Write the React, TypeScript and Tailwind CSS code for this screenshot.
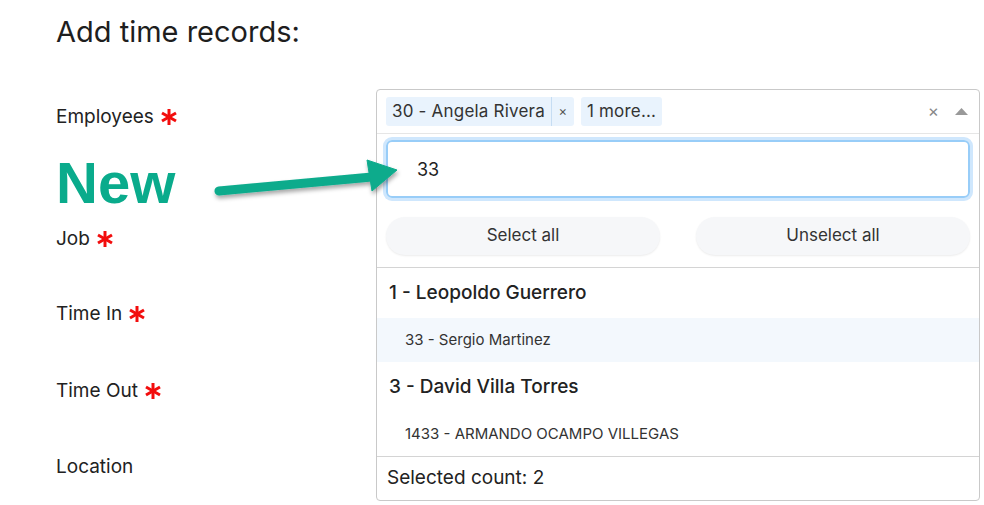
import React from "react"

const font = { fontFamily: "Inter, 'Noto Sans', sans-serif" }

function Star() {
  return (
    <svg width="18" height="18" viewBox="0 0 18 18" className="ml-[6px] shrink-0">
      <g stroke="#f20d0d" strokeWidth="3" strokeLinecap="butt">
        <line x1="9" y1="1" x2="9" y2="17" />
        <line x1="2" y1="5" x2="16" y2="13" />
        <line x1="2" y1="13" x2="16" y2="5" />
      </g>
    </svg>
  )
}

function Label({ text, required, className }: { text: string; required?: boolean; className?: string }) {
  return (
    <div className={"flex items-center h-[24px] text-[19px] text-[#222] " + (className ?? "")}>
      <span>{text}</span>
      {required && <Star />}
    </div>
  )
}

function Arrow() {
  return (
    <svg className="absolute left-0 top-0 pointer-events-none" width="984" height="505">
      <defs>
        <filter id="sh" x="-20%" y="-50%" width="140%" height="200%">
          <feDropShadow dx="1" dy="3" stdDeviation="2" floodColor="#000" floodOpacity="0.35" />
        </filter>
      </defs>
      <g filter="url(#sh)" fill="#0aab8c" stroke="#0aab8c">
        <line x1="219" y1="191" x2="372" y2="177" strokeWidth="9" strokeLinecap="round" />
        <polygon points="367,160 397,170 372,191" strokeWidth="1" strokeLinejoin="round" />
      </g>
    </svg>
  )
}

export default function App() {
  return (
    <div className="relative w-[984px] h-[505px] bg-white overflow-hidden" style={font}>
      <div className="pl-[56px] pt-[14px]">
        <h1 className="text-[29px] leading-[36px] text-[#1e1e1e] font-normal">Add time records:</h1>

        <div className="flex mt-[39px]">
          {/* labels */}
          <div className="w-[320px] flex flex-col">
            <Label text="Employees" required className="mt-[16px]" />
            <div
              className="mt-[25px] h-[58px] leading-[58px] text-[58px] font-bold text-[#0aab8c]"
              style={{ fontFamily: "'Liberation Sans', Arial, sans-serif" }}
            >
              New
            </div>
            <Label text="Job" required className="mt-[15px]" />
            <Label text="Time In" required className="mt-[51px]" />
            <Label text="Time Out" required className="mt-[53px]" />
            <Label text="Location" className="mt-[52px]" />
          </div>

          {/* dropdown */}
          <div className="w-[604px] h-[412px] border border-[#c9c9c9] rounded-[4px] flex flex-col bg-white">
            <div className="h-[44px] flex items-center px-[9px] border-b border-[#e6e6e6]">
              <div className="flex items-center h-[29px] bg-[#e9f3fd] rounded-[3px] text-[17px] tracking-[0.2px] text-[#333]">
                <span className="px-[6px]">30 - Angela Rivera</span>
                <span className="h-full w-px bg-[#c6ddf3]" />
                <span className="w-[22px] text-center text-[13px] text-[#555]">×</span>
              </div>
              <div className="ml-[7px] flex items-center h-[29px] px-[6px] bg-[#e9f3fd] rounded-[3px] text-[17px] tracking-[0.2px] text-[#333]">
                1 more...
              </div>
              <div className="flex-1" />
              <span className="text-[17px] text-[#888] mr-[16px]">×</span>
              <svg width="13" height="7" viewBox="0 0 13 7" className="mr-[2px]">
                <polygon points="0,7 6.5,0 13,7" fill="#999" />
              </svg>
            </div>

            <div className="px-[9px] pt-[6px]">
              <div className="h-[58px] rounded-[6px] border-2 border-[#98cdf8] ring-[3px] ring-[#cfe7fd] flex items-center pl-[29px] text-[18px] text-[#222]">
                33
              </div>
            </div>

            <div className="flex justify-between px-[9px] mt-[19px]">
              <button className="w-[274px] h-[38px] rounded-full bg-[#f6f7f9] shadow-[0_1px_2px_rgba(0,0,0,0.08)] text-[17px] text-[#333]">
                Select all
              </button>
              <button className="w-[274px] h-[38px] rounded-full bg-[#f6f7f9] shadow-[0_1px_2px_rgba(0,0,0,0.08)] text-[17px] text-[#333]">
                Unselect all
              </button>
            </div>

            <div className="mt-[12px] border-t border-[#d4d4d4] flex flex-col">
              <div className="h-[50px] flex items-center pl-[12px] text-[19px] font-medium text-[#222]">
                1 - Leopoldo Guerrero
              </div>
              <div className="h-[44px] flex items-center pl-[28px] text-[15px] text-[#333] bg-[#f3f8fd]">
                33 - Sergio Martinez
              </div>
              <div className="h-[50px] flex items-center pl-[12px] text-[19px] font-medium text-[#222]">
                3 - David Villa Torres
              </div>
              <div className="h-[44px] flex items-center pl-[28px] text-[15px] text-[#333]">
                1433 - ARMANDO OCAMPO VILLEGAS
              </div>
            </div>

            <div className="flex-1 border-t border-[#d4d4d4] flex items-center pl-[10px] text-[19px] text-[#222]">
              Selected count: 2
            </div>
          </div>
        </div>
      </div>
      <Arrow />
    </div>
  )
}
